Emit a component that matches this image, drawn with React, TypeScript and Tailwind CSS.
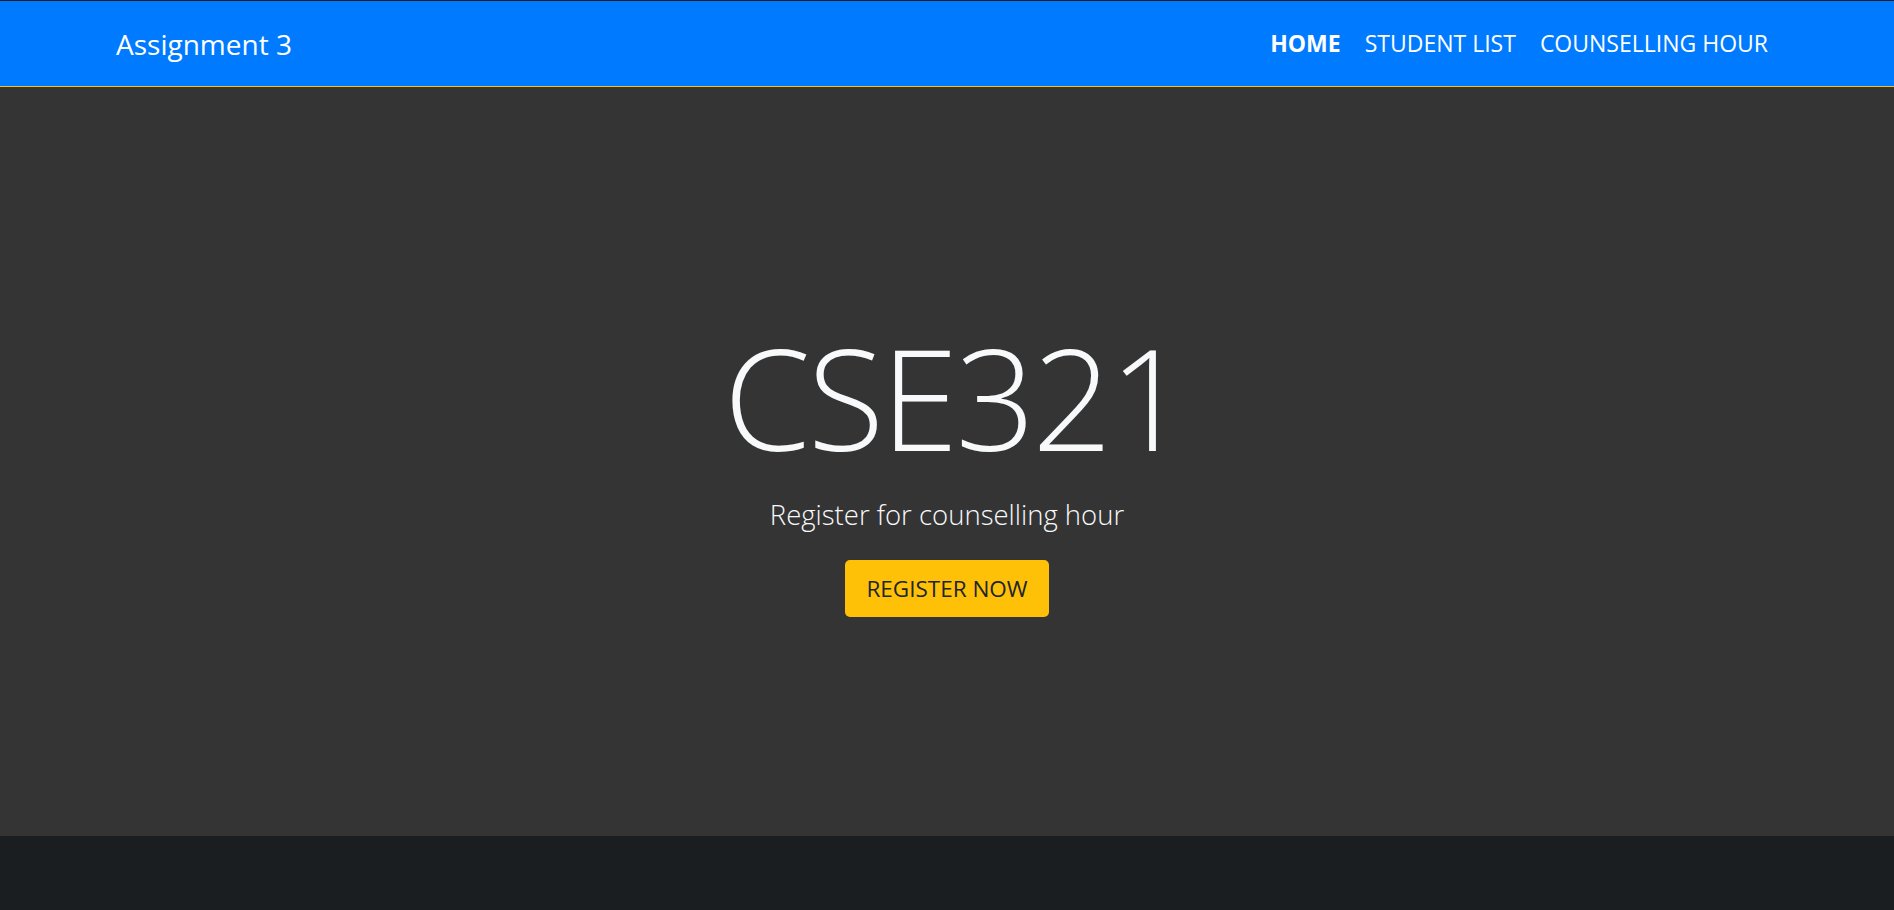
export default function App() {
  const links = ["HOME", "STUDENT LIST", "COUNSELLING HOUR"];

  return (
    <div className="min-h-[910px] flex flex-col bg-[#1b1e21] font-['Open_Sans',sans-serif]">
      {/* top navbar */}
      <header className="border-t border-[#1b1e21] border-b border-b-[#ffc107] bg-[#007bff] h-[87px] flex items-center justify-between pl-[116px] pr-[114px]">
        <span className="text-white text-[28px]">Assignment 3</span>
        <nav className="flex items-center">
          {links.map((l, i) => (
            <a
              key={l}
              href="#"
              className={`px-[12px] text-[23px] text-white ${
                i === 0 ? "font-bold" : ""
              }`}
            >
              {l}
            </a>
          ))}
        </nav>
      </header>

      {/* hero */}
      <section className="bg-[#343434] h-[749px] flex flex-col items-center pt-[226px]">
        <h1 className="text-[#f8f9fa] text-[140px] font-light leading-[1.2] tracking-[-3px] pl-[16px]">
          CSE321
        </h1>
        <p className="text-[#f8f9fa] text-[27.5px] font-light mt-[13px]">
          Register for counselling hour
        </p>
        <button className="mt-[25px] bg-[#ffc107] text-[#212529] text-[22.5px] px-[21px] h-[57px] rounded-[5px]">
          REGISTER NOW
        </button>
      </section>

      {/* footer */}
      <footer className="flex-1 bg-[#1b1e21]" />
    </div>
  );
}
